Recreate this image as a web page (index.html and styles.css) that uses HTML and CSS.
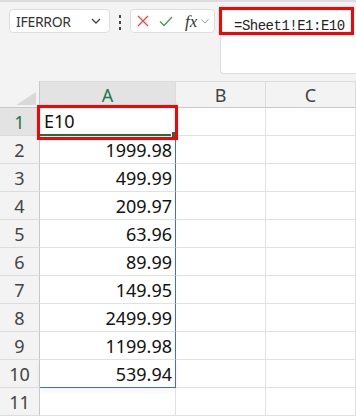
FILE: index.html
```html
<!DOCTYPE html>
<html>
<head>
  <meta charset="UTF-8">
  <title>Sheet</title>
  <link rel="stylesheet" href="styles.css">
</head>
<body>
  <div class="topline"></div>
  <div class="toolbar">
    <div class="name-box">
      <span>IFERROR</span>
      <svg width="10" height="6" viewBox="0 0 10 6"><path d="M1 1l4 4 4-4" fill="none" stroke="#444" stroke-width="1.3"/></svg>
    </div>
    <div class="dots"><i></i><i></i><i></i></div>
    <div class="fx-buttons">
      <svg width="12" height="12" viewBox="0 0 12 12"><path d="M1 1l10 10M11 1L1 11" stroke="#e5474e" stroke-width="1.3"/></svg>
      <svg width="14" height="11" viewBox="0 0 14 11"><path d="M1 5.5l4 4L13 1" fill="none" stroke="#3f9b5c" stroke-width="1.3"/></svg>
      <span class="fx">fx</span>
      <svg width="8" height="5" viewBox="0 0 8 5"><path d="M0.5 0.5l3.5 3.5 3.5-3.5" fill="none" stroke="#999" stroke-width="1"/></svg>
    </div>
    <div class="formula-bar">
      <span class="formula">=Sheet1!E1:E10</span>
    </div>
  </div>

  <div class="sheet">
    <div class="cell corner">
      <svg width="20" height="13" viewBox="0 0 20 13"><path d="M20 0V13H0Z" fill="#d9d9d9"/></svg>
    </div>
    <div class="cell col-head sel">A</div>
    <div class="cell col-head">B</div>
    <div class="cell col-head">C</div>

    <div class="cell row-head sel">1</div>
    <div class="cell text active">E10</div>
    <div class="cell"></div>
    <div class="cell"></div>

    <div class="cell row-head">2</div>
    <div class="cell num spill">1999.98</div>
    <div class="cell"></div>
    <div class="cell"></div>

    <div class="cell row-head">3</div>
    <div class="cell num spill">499.99</div>
    <div class="cell"></div>
    <div class="cell"></div>

    <div class="cell row-head">4</div>
    <div class="cell num spill">209.97</div>
    <div class="cell"></div>
    <div class="cell"></div>

    <div class="cell row-head">5</div>
    <div class="cell num spill">63.96</div>
    <div class="cell"></div>
    <div class="cell"></div>

    <div class="cell row-head">6</div>
    <div class="cell num spill">89.99</div>
    <div class="cell"></div>
    <div class="cell"></div>

    <div class="cell row-head">7</div>
    <div class="cell num spill">149.95</div>
    <div class="cell"></div>
    <div class="cell"></div>

    <div class="cell row-head">8</div>
    <div class="cell num spill">2499.99</div>
    <div class="cell"></div>
    <div class="cell"></div>

    <div class="cell row-head">9</div>
    <div class="cell num spill">1199.98</div>
    <div class="cell"></div>
    <div class="cell"></div>

    <div class="cell row-head">10</div>
    <div class="cell num spill last">539.94</div>
    <div class="cell"></div>
    <div class="cell"></div>

    <div class="cell row-head">11</div>
    <div class="cell"></div>
    <div class="cell"></div>
    <div class="cell"></div>
  </div>

  <div class="mark mark-formula"></div>
  <div class="mark mark-cell"></div>
</body>
</html>
```

FILE: styles.css
```css
* {
  box-sizing: border-box;
}

body {
  margin: 0;
  width: 356px;
  height: 416px;
  overflow: hidden;
  background: #f3f3f3;
  font-family: "Noto Sans", Arial, sans-serif;
  position: relative;
}

.topline {
  height: 2px;
  background: #dcdcdc;
}

.toolbar {
  display: flex;
  align-items: flex-start;
  height: 79px;
  padding: 7px 0 0 9px;
}

.name-box {
  display: flex;
  align-items: center;
  justify-content: space-between;
  width: 101px;
  height: 24px;
  padding: 0 8px 0 6px;
  background: #fff;
  border: 1px solid #dedede;
  border-radius: 4px;
  font-size: 14px;
  letter-spacing: -0.3px;
  color: #333;
}

.dots {
  display: flex;
  flex-direction: column;
  gap: 3px;
  margin: 6px 0 0 9px;
}

.dots i {
  width: 2px;
  height: 3px;
  background: #444;
}

.fx-buttons {
  display: flex;
  align-items: center;
  width: 85px;
  height: 24px;
  margin-left: 9px;
  padding-left: 6px;
  gap: 10px;
  background: #fff;
  border: 1px solid #dedede;
  border-radius: 4px;
}

.fx {
  font-family: "Liberation Serif", "DejaVu Serif", serif;
  font-style: italic;
  font-size: 17px;
  color: #333;
  margin-left: 2px;
  margin-right: -6px;
  line-height: 1;
}

.formula-bar {
  flex: 1;
  height: 66px;
  margin-left: 5px;
  margin-top: -1px;
  padding: 4px 0 0 13px;
  background: #fff;
  border: 1px solid #dcdcdc;
  border-right: none;
  border-radius: 4px 0 0 4px;
}

.formula {
  font-family: "Liberation Mono", "DejaVu Sans Mono", monospace;
  font-size: 14px;
  letter-spacing: -0.5px;
  color: #222;
}

.sheet {
  display: grid;
  grid-template-columns: 40px 136px 90px 90px;
  grid-template-rows: 27px repeat(11, 28px);
  background: #fff;
}

.cell {
  border-right: 1px solid #e1e1e1;
  border-bottom: 1px solid #e1e1e1;
  font-size: 18px;
  color: #111;
  display: flex;
  align-items: center;
  white-space: nowrap;
}

.corner {
  background: #f3f3f3;
  border-right: 1px solid #c8c8c8;
  border-bottom: 1px solid #c8c8c8;
  align-items: flex-end;
  justify-content: flex-end;
  padding: 0 3px 2px 0;
}

.col-head {
  background: #f3f3f3;
  border-top: 1px solid #dcdcdc;
  border-bottom: 1px solid #c8c8c8;
  border-right: 1px solid #dcdcdc;
  justify-content: center;
  color: #444;
}

.row-head {
  background: #f3f3f3;
  border-right: 1px solid #c8c8c8;
  border-bottom: 1px solid #dcdcdc;
  justify-content: center;
  color: #444;
}

.col-head.sel,
.row-head.sel {
  background: #e3e3e3;
  color: #1b7a47;
}

.text {
  padding-left: 4px;
}

.active {
  position: relative;
  border-bottom: 2px solid #1e6e42;
}

.active::after {
  content: "";
  position: absolute;
  right: -3px;
  bottom: -4px;
  width: 5px;
  height: 5px;
  background: #1e6e42;
  border: 1px solid #fff;
}

.num {
  justify-content: flex-end;
  padding-right: 3px;
}

.spill {
  border-right: 1px solid #3b6fd1;
}

.spill.last {
  border-bottom: 1px solid #3b6fd1;
  box-shadow: 0 3px 6px rgba(0, 0, 0, 0.05);
}

.mark {
  position: absolute;
  border: 3px solid #f00;
}

.mark-formula {
  left: 219px;
  top: 7px;
  width: 135px;
  height: 28px;
}

.mark-cell {
  left: 37px;
  top: 105px;
  width: 141px;
  height: 35px;
}
```
